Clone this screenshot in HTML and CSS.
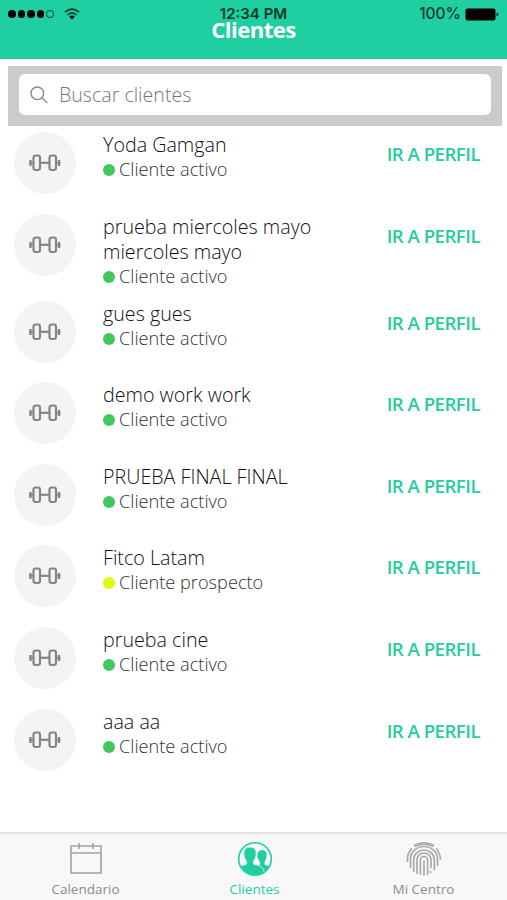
FILE: index.html
```
<!DOCTYPE html>
<html lang="es">
<head>
    <meta charset="UTF-8">
    <meta name="viewport" content="width=device-width, initial-scale=1.0">
    <title>Clientes</title>
    <link rel="stylesheet" href="styles.css">
</head>
<body>

<svg class="sprite">
    <symbol id="dumbbell" viewBox="0 0 34 18">
        <g fill="none" stroke="#858585" stroke-width="2.2">
            <rect x="5.5" y="1.5" width="6.5" height="14.5" rx="2.2" />
            <rect x="21.5" y="1.5" width="6.5" height="14.5" rx="2.2" />
            <path d="M12 8.8h9.5" />
            <path d="M2.5 6v6M31 6v6" stroke-width="2.4" />
            <path d="M1 8.8h4M28.5 8.8h4" stroke-width="1.5" />
        </g>
    </symbol>
</svg>

<div class="app">
    <header class="header">
        <div class="status-bar">
            <div class="signal">
                <i></i><i></i><i></i><i></i><i class="empty"></i>
                <svg class="wifi" width="16" height="12" viewBox="0 0 16 12">
                    <g fill="none" stroke="#07392a" stroke-width="1.6">
                        <path d="M1 4.2Q8-1.8 15 4.2" />
                        <path d="M3.6 7Q8 3.2 12.4 7" />
                    </g>
                    <path d="M5.2 8.6Q8 6.3 10.8 8.6L8 11.5Z" fill="#000" />
                </svg>
            </div>
            <span class="time">12:34 PM</span>
            <div class="battery">
                <span>100%</span>
                <svg width="34" height="13" viewBox="0 0 34 13">
                    <rect x="0.5" y="0.5" width="30" height="12" rx="2" fill="#000" />
                    <path d="M31.5 4.5q2 .5 2 2t-2 2z" fill="#07392a" />
                </svg>
            </div>
        </div>
        <h1>Clientes</h1>
    </header>

    <div class="search">
        <label class="search-box">
            <svg width="18" height="18" viewBox="0 0 18 18" fill="none" stroke="#8a8a8a" stroke-width="1.4">
                <circle cx="7.3" cy="7.3" r="6.3" />
                <path d="M11.8 11.8L17.3 17" />
            </svg>
            <input type="text" placeholder="Buscar clientes">
        </label>
    </div>

    <main class="clients">
        <div class="client">
            <div class="avatar"><svg><use href="#dumbbell" /></svg></div>
            <div class="info">
                <p class="name">Yoda Gamgan</p>
                <p class="state">Cliente activo</p>
            </div>
            <a class="profile">IR A PERFIL</a>
        </div>
        <div class="client tall">
            <div class="avatar"><svg><use href="#dumbbell" /></svg></div>
            <div class="info">
                <p class="name">prueba miercoles mayo miercoles mayo</p>
                <p class="state">Cliente activo</p>
            </div>
            <a class="profile">IR A PERFIL</a>
        </div>
        <div class="client">
            <div class="avatar"><svg><use href="#dumbbell" /></svg></div>
            <div class="info">
                <p class="name">gues gues</p>
                <p class="state">Cliente activo</p>
            </div>
            <a class="profile">IR A PERFIL</a>
        </div>
        <div class="client">
            <div class="avatar"><svg><use href="#dumbbell" /></svg></div>
            <div class="info">
                <p class="name">demo work work</p>
                <p class="state">Cliente activo</p>
            </div>
            <a class="profile">IR A PERFIL</a>
        </div>
        <div class="client">
            <div class="avatar"><svg><use href="#dumbbell" /></svg></div>
            <div class="info">
                <p class="name">PRUEBA FINAL FINAL</p>
                <p class="state">Cliente activo</p>
            </div>
            <a class="profile">IR A PERFIL</a>
        </div>
        <div class="client">
            <div class="avatar"><svg><use href="#dumbbell" /></svg></div>
            <div class="info">
                <p class="name">Fitco Latam</p>
                <p class="state prospect">Cliente prospecto</p>
            </div>
            <a class="profile">IR A PERFIL</a>
        </div>
        <div class="client">
            <div class="avatar"><svg><use href="#dumbbell" /></svg></div>
            <div class="info">
                <p class="name">prueba cine</p>
                <p class="state">Cliente activo</p>
            </div>
            <a class="profile">IR A PERFIL</a>
        </div>
        <div class="client">
            <div class="avatar"><svg><use href="#dumbbell" /></svg></div>
            <div class="info">
                <p class="name">aaa aa</p>
                <p class="state">Cliente activo</p>
            </div>
            <a class="profile">IR A PERFIL</a>
        </div>
    </main>

    <nav class="tabs">
        <a class="tab">
            <svg viewBox="0 0 36 36" fill="none" stroke="#a2a2a2" stroke-width="1.6">
                <path d="M3 5h30v27H3zM3 12h30M11 2v6M25 2v6" />
            </svg>
            <span>Calendario</span>
        </a>
        <a class="tab active">
            <svg viewBox="0 0 36 36">
                <defs><clipPath id="round"><circle cx="18" cy="18" r="16" /></clipPath></defs>
                <g clip-path="url(#round)" fill="#1fcfa2">
                    <path d="M20 26q1-2 3-2.500v-2.500c-2-2-3-5-2.500-8q.8-4 4.500-4t4.500 4c.5 3-.5 6-2 8v2.500q5 1.500 8 3.500v9H20z" />
                    <path d="M1 36v-9q5-3 8.500-4v-3c-2-2-3-5-2.600-9q.8-5 6.100-5t6.100 5c.4 4-.6 7-2.600 9v3c5 1 9 3 10.500 6v7z" stroke="#f8f8f8" stroke-width=".8" />
                </g>
                <circle cx="18" cy="18" r="16.300" fill="none" stroke="#1fcfa2" stroke-width="1.600" />
            </svg>
            <span>Clientes</span>
        </a>
        <a class="tab">
            <svg viewBox="0 0 36 36" fill="none" stroke="#aaa" stroke-width="1.700">
                <path d="M8 4.500Q18-1 28 4.500" />
                <path d="M1.500 21v-4Q2 11 6 7.500M9 5.500Q18 1 27 5.500M30 7.500Q34 11.500 34.500 19" />
                <path d="M4.500 27V18a13.500 12.500 0 0 1 27 0v7" />
                <path d="M7.700 31V18.500a10.300 9.500 0 0 1 20.600 0v11" />
                <path d="M11 33V19a7 7 0 0 1 14 0v8M24.500 30v2" />
                <path d="M14.400 34V19.500a3.600 4 0 0 1 7.200 0V34" />
                <path d="M18 19.500v15" />
            </svg>
            <span>Mi Centro</span>
        </a>
    </nav>
</div>

</body>
</html>
```
FILE: styles.css
```
* {
    box-sizing: border-box;
}

body {
    margin: 0;
    font-family: "Open Sans", sans-serif;
    background-color: #fff;
}

p, h1 {
    margin: 0;
}

.sprite {
    display: none;
}

.app {
    display: flex;
    flex-direction: column;
    height: 900px;
    overflow: hidden;
}

.header {
    height: 59px;
    background-color: #1fcfa2;
    border-bottom: 1px solid #1bc398;
    text-align: center;
}

.status-bar {
    display: grid;
    grid-template-columns: 1fr auto 1fr;
    align-items: center;
    height: 19px;
    padding: 5px 8px 0;
    font-family: Inter, sans-serif;
    font-size: 15.5px;
    line-height: 18px;
    color: #07392a;
}

.signal {
    display: flex;
    align-items: center;
    gap: 2px;
}

.signal i {
    width: 7.5px;
    height: 7.5px;
    border-radius: 50%;
    background-color: #000;
}

.signal .empty {
    background-color: transparent;
    border: 1px solid #07392a;
}

.wifi {
    margin-left: 8px;
}

.time {
    font-size: 15px;
    font-weight: 600;
}

.battery {
    display: flex;
    align-items: center;
    justify-content: flex-end;
    gap: 4px;
    font-weight: 500;
}

h1 {
    font-size: 22px;
    font-weight: 700;
    line-height: 20px;
    letter-spacing: -0.5px;
    color: #fff;
}

.search {
    height: 60px;
    margin: 7px 5px 0 8px;
    padding: 8px 11px 11px;
    background-color: #cbcbcb;
}

.search-box {
    display: flex;
    align-items: center;
    gap: 11px;
    height: 41px;
    padding: 0 11px;
    border-radius: 6px;
    background-color: #fff;
}

.search-box input {
    flex: 1;
    padding: 0;
    border: none;
    outline: none;
    font-family: inherit;
    font-size: 19.6px;
    font-weight: 300;
}

.search-box input::placeholder {
    color: #777;
}

.clients {
    flex: 1;
    padding: 6px 27px 0 14px;
}

.client {
    display: flex;
    align-items: flex-start;
    height: 81.6px;
}

.client.tall {
    height: 87px;
}

.avatar {
    display: flex;
    align-items: center;
    justify-content: center;
    width: 62px;
    height: 62px;
    border-radius: 50%;
    background-color: #f4f4f4;
}

.avatar svg {
    width: 34px;
    height: 18px;
}

.info {
    width: 230px;
    margin-left: 27px;
}

.name {
    font-size: 19.7px;
    font-weight: 300;
    line-height: 25px;
    color: #111;
}

.state {
    display: flex;
    align-items: center;
    gap: 4px;
    font-size: 18.2px;
    font-weight: 300;
    line-height: 24px;
    color: #333;
}

.state::before {
    content: "";
    width: 12px;
    height: 12px;
    margin-top: 2px;
    border-radius: 50%;
    background-color: #42c85f;
}

.state.prospect::before {
    background-color: #dcfb0a;
}

.profile {
    margin-left: auto;
    padding-top: 10px;
    font-size: 18.6px;
    font-weight: 600;
    line-height: 24px;
    letter-spacing: -0.5px;
    color: #25cc9d;
}

.tabs {
    display: grid;
    grid-template-columns: repeat(3, 1fr);
    height: 68px;
    border-top: 2px solid #e3e3e3;
    background-color: #f8f8f8;
}

.tab {
    display: flex;
    flex-direction: column;
    align-items: center;
    padding: 7px 0 0 2px;
    font-size: 13.5px;
    line-height: 20px;
    color: #8c8c8c;
}

.tab svg {
    width: 36px;
    height: 36px;
    margin-bottom: 2px;
}

.tab.active {
    color: #1fcfa2;
}
```
